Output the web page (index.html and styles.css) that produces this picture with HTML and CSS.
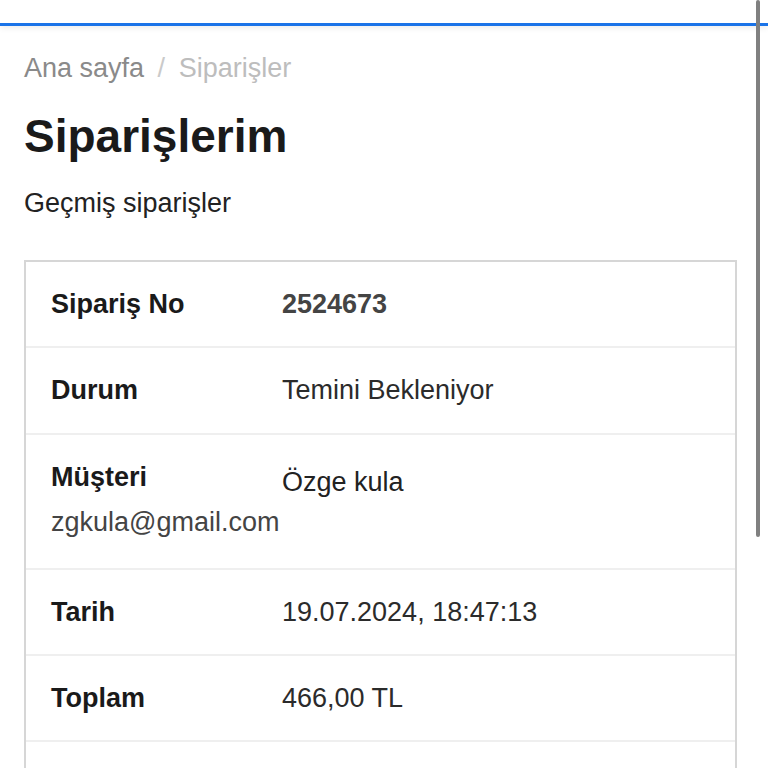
FILE: index.html
```html
<!DOCTYPE html>
<html lang="tr">
<head>
  <meta charset="UTF-8">
  <meta name="viewport" content="width=device-width, initial-scale=1.0">
  <title>Siparişlerim</title>
  <link rel="stylesheet" href="styles.css">
</head>
<body>
  <!-- Top bar -->
  <header class="top-bar"></header>

  <div class="scrollbar"></div>

  <div class="container">
    <nav class="breadcrumb">
      <a href="#" class="crumb-link">Ana sayfa</a>
      <span class="crumb-sep">/</span>
      <span class="crumb-current">Siparişler</span>
    </nav>

    <h1 class="page-title">Siparişlerim</h1>
    <p class="page-subtitle">Geçmiş siparişler</p>

    <!-- Order details -->
    <div class="order-card">
      <div class="order-row">
        <span class="order-label">Sipariş No</span><span class="order-value order-no">2524673</span>
      </div>
      <div class="order-row">
        <span class="order-label">Durum</span><span class="order-value">Temini Bekleniyor</span>
      </div>
      <div class="order-row customer-row">
        <span class="order-label">Müşteri</span><span class="order-value customer-name">Özge kula</span>
        <div class="customer-email">zgkula@gmail.com</div>
      </div>
      <div class="order-row">
        <span class="order-label">Tarih</span><span class="order-value">19.07.2024, 18:47:13</span>
      </div>
      <div class="order-row">
        <span class="order-label">Toplam</span><span class="order-value">466,00 TL</span>
      </div>
      <div class="order-row">
        <span class="order-label">&nbsp;</span>
      </div>
    </div>
  </div>
</body>
</html>
```

FILE: styles.css
```css
/* Base styles */
* {
  box-sizing: border-box;
}

body {
  margin: 0;
  background-color: #fff;
  color: #222;
  font-family: "Liberation Sans", Arial, sans-serif;
  font-size: 27px;
  line-height: 1.2;
  overflow: hidden;
}

/* Top bar */
.top-bar {
  height: 26px;
  background-color: #fff;
  border-bottom: 3px solid #1a73e8;
  box-shadow: 0 2px 6px rgba(0,0,0,0.08);
}

.scrollbar {
  position: fixed;
  top: 0;
  right: 8px;
  width: 4px;
  height: 537px;
  border-radius: 2px;
  background-color: #808080;
}

.container {
  padding: 26px 31px 0 24px;
}

/* Breadcrumb */
.breadcrumb {
  color: #8a8a8a;
}

.crumb-link {
  color: #8a8a8a;
  text-decoration: none;
}

.crumb-sep {
  color: #cacaca;
  margin: 0 6px;
}

.crumb-current {
  color: #bdbdbd;
}

/* Heading */
.page-title {
  margin: 25px 0 0;
  font-size: 46px;
  font-weight: bold;
  color: #1a1a1a;
}

.page-subtitle {
  margin: 22px 0 0;
  color: #222;
}

/* Order card */
.order-card {
  margin-top: 41px;
  border: 2px solid #d6d6d6;
  border-bottom: none;
}

.order-row {
  padding: 26px 25px;
  border-bottom: 2px solid #efefef;
}

.customer-row {
  padding-bottom: 29px;
}

.order-label {
  display: inline-block;
  width: 231px;
  font-weight: bold;
  color: #1a1a1a;
}

.order-value {
  color: #2b2b2b;
}

.order-no {
  font-weight: bold;
  color: #444;
}

.customer-name {
  vertical-align: -5px;
  color: #222;
}

.customer-email {
  margin-top: 8px;
  color: #444;
}
```
